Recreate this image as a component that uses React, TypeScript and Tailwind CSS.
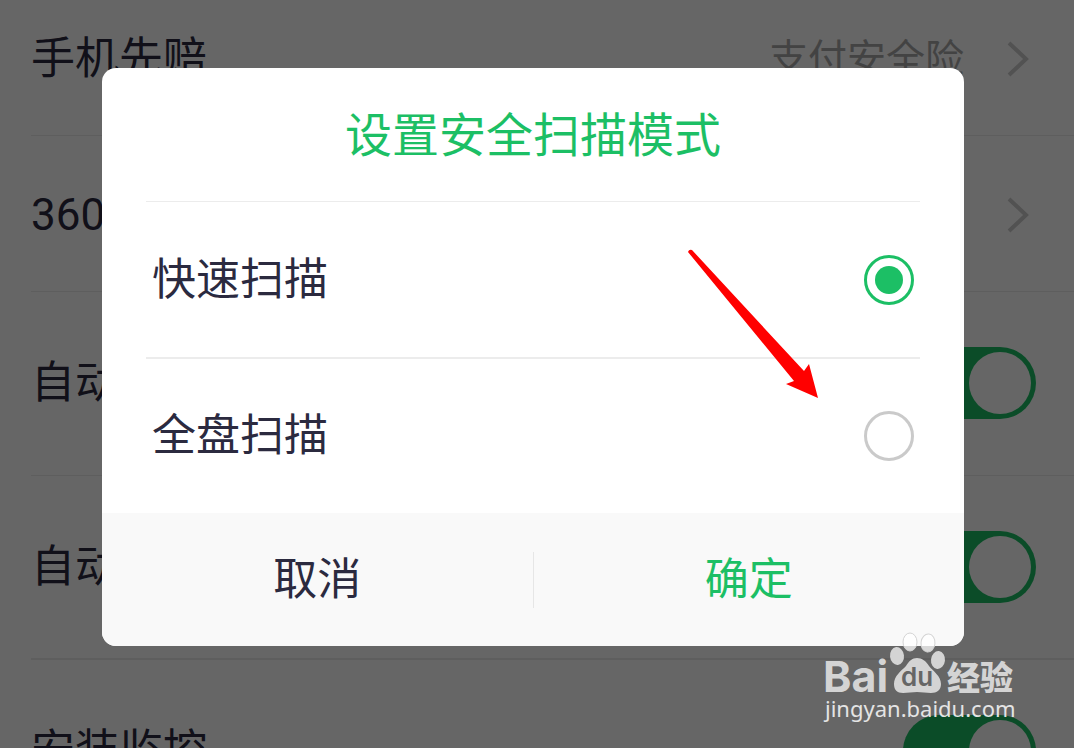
import { useState } from "react";
import type { ReactNode } from "react";

const scanModes = [
  { id: "quick", label: "快速扫描", row: "h-[157px] border-b-2" },
  { id: "full", label: "全盘扫描", row: "h-[154px]" },
];

function Chevron() {
  return (
    <svg width="24" height="38" viewBox="0 0 24 38" fill="none" className="shrink-0 text-[#cccccc]" aria-hidden="true">
      <path d="M3 3l17 16L3 35" stroke="currentColor" strokeWidth="4" />
    </svg>
  );
}

function LinkRow({ label, hint, className }: { label: string; hint?: string; className: string }) {
  return (
    <li className={`ml-[31px] flex border-b border-[#ececec] ${className}`}>
      <a href="#" className="flex flex-1 items-center pr-[44px]">
        <span className="flex-1">{label}</span>
        {hint && <span className="mr-[42px] text-[39px] leading-[48px] text-[#a8a8a8]">{hint}</span>}
        <Chevron />
      </a>
    </li>
  );
}

function SwitchRow({ label, className }: { label: string; className: string }) {
  return (
    <li className={`ml-[31px] h-[184px] border-[#ececec] ${className}`}>
      <label className="flex h-full items-center justify-between pr-[38px]">
        <span>{label}</span>
        <input
          type="checkbox"
          role="switch"
          defaultChecked
          className="flex h-[72px] w-[133px] appearance-none items-center rounded-full bg-[#ccc] p-[5px] before:size-[62px] before:rounded-full before:bg-white checked:justify-end checked:bg-[#1cbf65]"
        />
      </label>
    </li>
  );
}

function DialogButton({ children, className }: { children: ReactNode; className: string }) {
  return (
    <button type="button" className={`flex-1 text-[44px] leading-[56px] ${className}`}>
      {children}
    </button>
  );
}

function Arrow() {
  return (
    <svg
      width="134"
      height="150"
      viewBox="0 0 134 150"
      className="pointer-events-none absolute top-[181px] left-[585px]"
      aria-hidden="true"
    >
      <path d="M1 3q1-3 4-2L117 122l5-7 9 34-32-14 8-3z" fill="#ff0000" />
    </svg>
  );
}

function Watermark() {
  return (
    <svg
      width="196"
      height="100"
      viewBox="0 0 196 100"
      className="pointer-events-none absolute right-[56px] bottom-[18px]"
      role="img"
      aria-label="Baidu 经验"
    >
      <g fill="#d4d4d4">
        <text x="1" y="62" fontSize="43" fontWeight="700" fontFamily="Inter, sans-serif">
          Bai
        </text>
        <ellipse cx="75" cy="26" rx="7" ry="9" transform="rotate(-6 75 26)" />
        <ellipse cx="116" cy="30" rx="7" ry="9" transform="rotate(6 116 30)" />
        <path d="M95 28c5 0 9 3 12 8 4 5 12 10 12 18 0 6-4 9-10 9-5 0-9-1-14-1s-9 1-14 1c-6 0-9-3-9-9 0-8 7-13 12-18 3-5 6-8 11-8z" />
        <text x="125" y="60" fontSize="33" fontWeight="900" fontFamily="'Noto Sans CJK SC', sans-serif">
          经验
        </text>
      </g>
      <g fill="#ffffff" fillOpacity="0.75" stroke="#d4d4d4">
        <ellipse cx="88" cy="12" rx="7" ry="9" />
        <ellipse cx="106" cy="13" rx="7" ry="9" transform="rotate(6 106 13)" />
      </g>
      <text x="79" y="56" fontSize="26" fontWeight="600" fill="#666666" fontFamily="Inter, sans-serif">
        du
      </text>
      <text x="3" y="87" fontSize="22" fill="#e4e4e4" fontFamily="'Noto Sans', sans-serif">
        jingyan.baidu.com
      </text>
    </svg>
  );
}

export default function App() {
  const [mode, setMode] = useState("quick");

  return (
    <div className="relative h-screen overflow-hidden bg-white font-[Roboto,'Noto_Sans_CJK_SC',sans-serif] text-[44px] leading-[56px] text-[#2b2a3f]">
      <ul>
        <LinkRow label="手机先赔" hint="支付安全险" className="h-[136px] pb-[18px]" />
        <LinkRow label="360" className="h-[156px] pt-[2px]" />
        <SwitchRow label="自动" className="border-b pb-px" />
        <SwitchRow label="自动" className="border-b-2" />
        <SwitchRow label="安装监控" className="pb-[2px]" />
      </ul>

      <div className="absolute inset-0 flex items-center bg-black/60 pr-[110px] pb-[34px] pl-[102px]">
        <div role="dialog" aria-modal="true" aria-labelledby="dialog-title" className="relative w-full rounded-[14px] bg-white">
          <div className="px-[44px]">
            <h1
              id="dialog-title"
              className="flex h-[134px] items-center justify-center border-b border-[#ececec] pt-[3px] text-[47px] text-[#1cbf65]"
            >
              设置安全扫描模式
            </h1>
            <div role="radiogroup" aria-labelledby="dialog-title">
              {scanModes.map((item) => (
                <label key={item.id} className={`flex items-center justify-between border-[#ececec] px-[6px] ${item.row}`}>
                  <span>{item.label}</span>
                  <input
                    type="radio"
                    name="scan-mode"
                    value={item.id}
                    checked={mode === item.id}
                    onChange={() => setMode(item.id)}
                    className="grid size-[50px] appearance-none place-items-center rounded-full border-3 border-[#cacaca] checked:border-[#1cbf65] checked:before:size-[28px] checked:before:rounded-full checked:before:bg-[#1cbf65]"
                  />
                </label>
              ))}
            </div>
          </div>
          <div className="flex h-[133px] items-center divide-x divide-[#e6e6e6] rounded-b-[14px] bg-[#f9f9f9]">
            <DialogButton className="text-[#2b2a3f]">取消</DialogButton>
            <DialogButton className="text-[#1cbf65]">确定</DialogButton>
          </div>
          <Arrow />
        </div>
      </div>

      <Watermark />
    </div>
  );
}
